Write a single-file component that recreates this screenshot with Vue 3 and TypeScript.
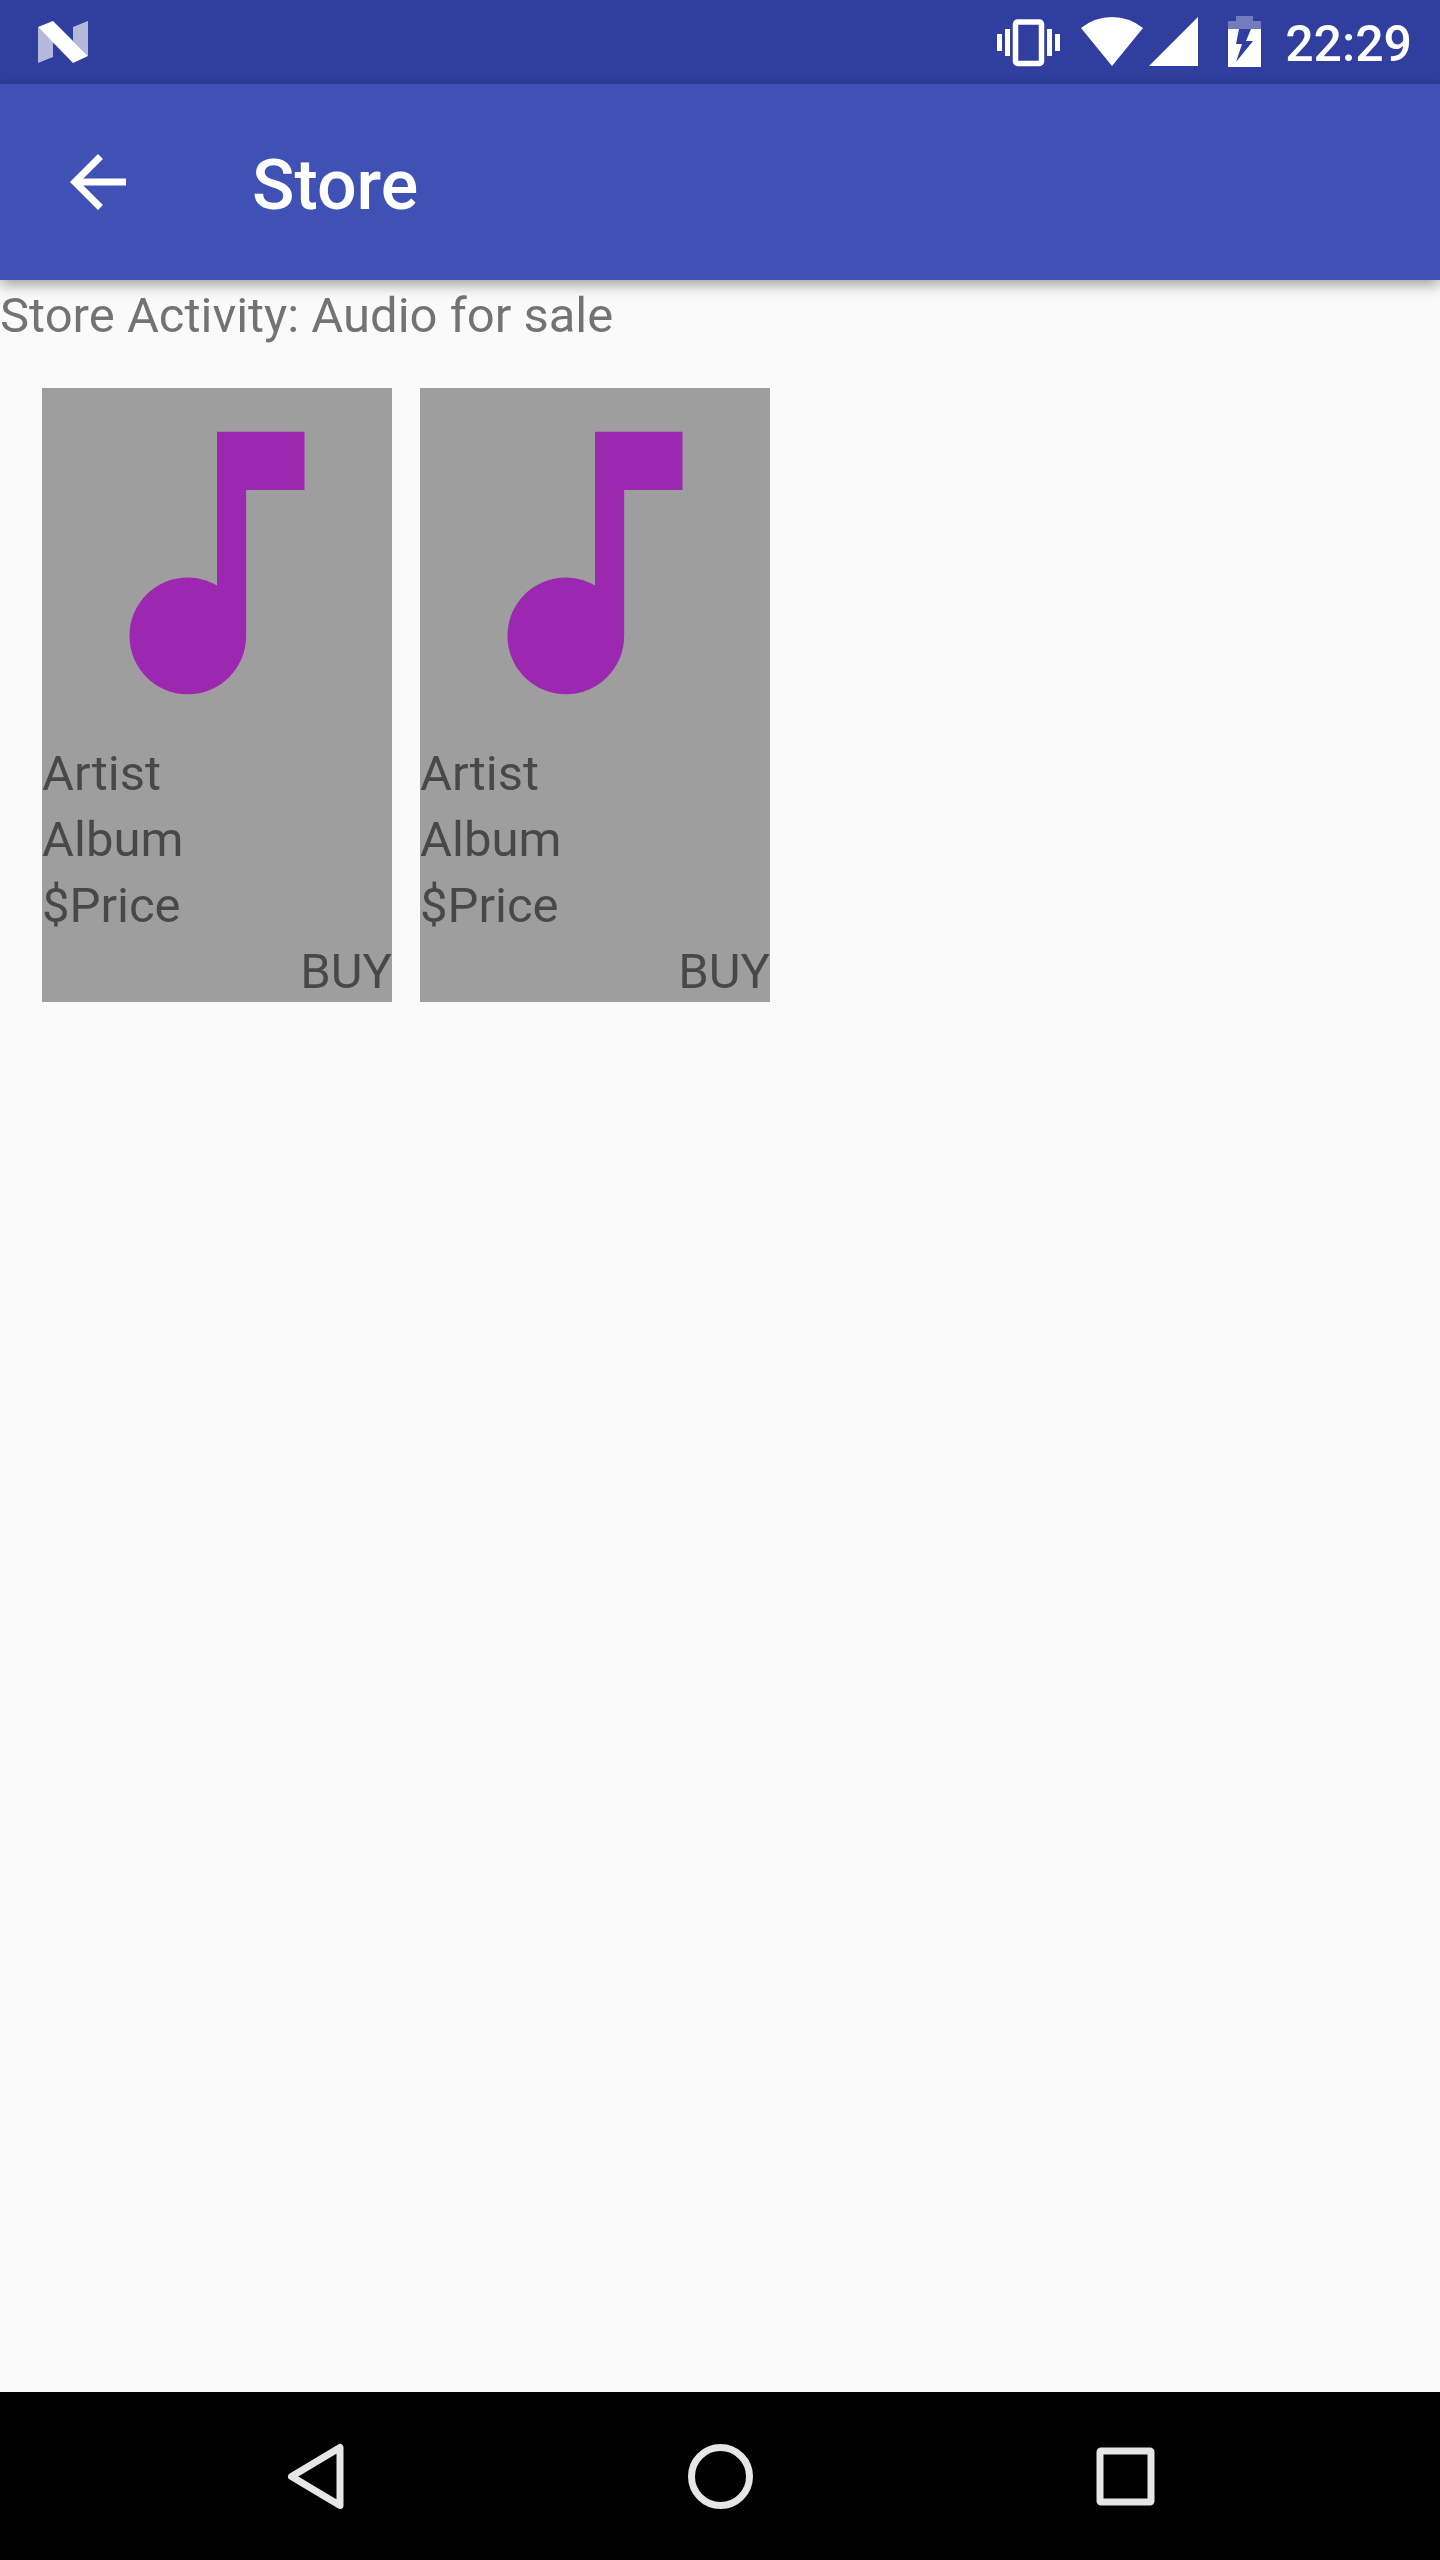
<script setup lang="ts">
interface StoreItem {
  id: number
  artist: string
  album: string
  price: string
}

const time = '22:29'

const items: StoreItem[] = [
  { id: 1, artist: 'Artist', album: 'Album', price: '$Price' },
  { id: 2, artist: 'Artist', album: 'Album', price: '$Price' },
]
</script>

<template>
  <div class="screen">
    <div class="status-bar">
      <svg class="n-logo" viewBox="0 0 50 42" aria-hidden="true">
        <path d="M0 6V42L15 36V21ZM50 0L35 6V20L50 35Z" fill="#fff" fill-opacity=".64" />
        <path d="M0 6L15 0L50 35L35 42Z" fill="#fff" />
      </svg>
      <div class="status-icons">
        <svg class="vibrate" viewBox="0 0 64 52" aria-hidden="true">
          <path d="M0 18h5v17H0zM8 13h5v27H8zM50 13h5v27h-5zM58 18h5v17h-5z" fill="#fff" />
          <rect x="18.5" y="6" width="26" height="41.5" rx="2" fill="none" stroke="#fff" stroke-width="5.5" />
        </svg>
        <svg class="wifi" viewBox="0 0 62 52" aria-hidden="true">
          <path d="M0 12Q14 1 31 1T62 12L31 50Z" fill="#fff" />
        </svg>
        <svg class="cell" viewBox="0 0 49 52" aria-hidden="true">
          <path d="M0 50H49V1Z" fill="#fff" />
        </svg>
        <svg class="battery" viewBox="0 0 33 52" aria-hidden="true">
          <path d="M0 5h8V0h17v5h8v8H0z" fill="#fff" fill-opacity=".32" />
          <path d="M0 13H11L8 28H14L8 46L25 25H18L23 13H33V51H0Z" fill="#fff" />
        </svg>
        <span class="clock">{{ time }}</span>
      </div>
    </div>

    <header class="app-bar">
      <button class="back" type="button" aria-label="Navigate up">
        <svg viewBox="0 0 24 24" aria-hidden="true">
          <path d="M20 11H7.83l5.59-5.59L12 4l-8 8 8 8 1.41-1.41L7.83 13H20v-2z" fill="#fff" />
        </svg>
      </button>
      <h1 class="title">Store</h1>
    </header>

    <main class="content">
      <p class="line">Store Activity: Audio for sale</p>
      <ul class="items">
        <li v-for="item in items" :key="item.id" class="card">
          <svg class="cover" viewBox="0 0 24 24" aria-hidden="true">
            <path
              d="M12 3v10.55c-.59-.34-1.27-.55-2-.55-2.21 0-4 1.79-4 4s1.79 4 4 4 4-1.79 4-4V7h4V3h-6z"
              fill="#9c27b0"
            />
          </svg>
          <span class="line">{{ item.artist }}</span>
          <span class="line">{{ item.album }}</span>
          <span class="line">{{ item.price }}</span>
          <button class="line buy" type="button">BUY</button>
        </li>
      </ul>
    </main>

    <nav class="nav-bar" aria-label="System navigation">
      <button class="key" type="button" aria-label="Back">
        <svg viewBox="0 0 84 84" aria-hidden="true">
          <path d="M18.5 42.5L67 13.5V71.5Z" />
        </svg>
      </button>
      <button class="key" type="button" aria-label="Home">
        <svg viewBox="0 0 84 84" aria-hidden="true">
          <circle cx="42.5" cy="42.5" r="29" />
        </svg>
      </button>
      <button class="key" type="button" aria-label="Recent apps">
        <svg viewBox="0 0 84 84" aria-hidden="true">
          <rect x="17" y="17" width="51" height="51" rx="1" />
        </svg>
      </button>
    </nav>
  </div>
</template>

<style>
body {
  margin: 0;
}
</style>

<style scoped>
.screen {
  display: flex;
  flex-direction: column;
  min-height: 100vh;
  background: #fafafa;
  color: rgba(0, 0, 0, 0.54);
  font-family: Roboto, 'Noto Sans', sans-serif;
  font-size: 49px;
}

svg {
  display: block;
}

button {
  margin: 0;
  padding: 0;
  border: 0;
  background: none;
  color: inherit;
  font: inherit;
  cursor: pointer;
}

.status-bar {
  display: flex;
  align-items: center;
  justify-content: space-between;
  box-sizing: border-box;
  height: 84px;
  padding: 0 28px 0 38px;
  background: #303f9f;
  color: #fff;
}

.n-logo {
  width: 50px;
  height: 42px;
}

.status-icons {
  display: flex;
  align-items: center;
}

.status-icons svg {
  height: 52px;
}

.vibrate {
  width: 64px;
  margin-right: 20px;
}

.wifi {
  width: 62px;
  margin-right: 6px;
}

.cell {
  width: 49px;
  margin-right: 30px;
}

.battery {
  width: 33px;
  margin-right: 24px;
}

.clock {
  padding-top: 4px;
  font-size: 50px;
  font-weight: 500;
  line-height: 58px;
}

.app-bar {
  position: relative;
  display: flex;
  align-items: center;
  height: 196px;
  background: #3f51b5;
  box-shadow: 0 4px 14px rgba(0, 0, 0, 0.4);
  color: #fff;
}

.back {
  width: 196px;
  height: 196px;
  padding: 56px;
}

.back svg {
  width: 84px;
  height: 84px;
}

.title {
  margin: 0 0 0 56px;
  padding-top: 6px;
  font-size: 70px;
  font-weight: 500;
  line-height: 82px;
}

.content {
  flex: 1;
}

.line {
  display: block;
  margin: 0;
  padding-top: 6px;
  line-height: 60px;
}

.items {
  display: flex;
  flex-wrap: wrap;
  gap: 28px;
  margin: 0;
  padding: 42px;
  list-style: none;
}

.card {
  display: flex;
  flex-direction: column;
  width: 350px;
  background: #9e9e9e;
}

.cover {
  width: 350px;
  height: 350px;
}

.buy {
  align-self: flex-end;
}

.nav-bar {
  display: grid;
  grid-template-columns: repeat(3, 1fr);
  height: 168px;
  padding: 0 112px;
  background: #000;
}

.key {
  display: flex;
  align-items: center;
  justify-content: center;
}

.key svg {
  width: 84px;
  height: 84px;
  fill: none;
  stroke: #e6e6e6;
  stroke-width: 7;
  stroke-linejoin: round;
}
</style>
